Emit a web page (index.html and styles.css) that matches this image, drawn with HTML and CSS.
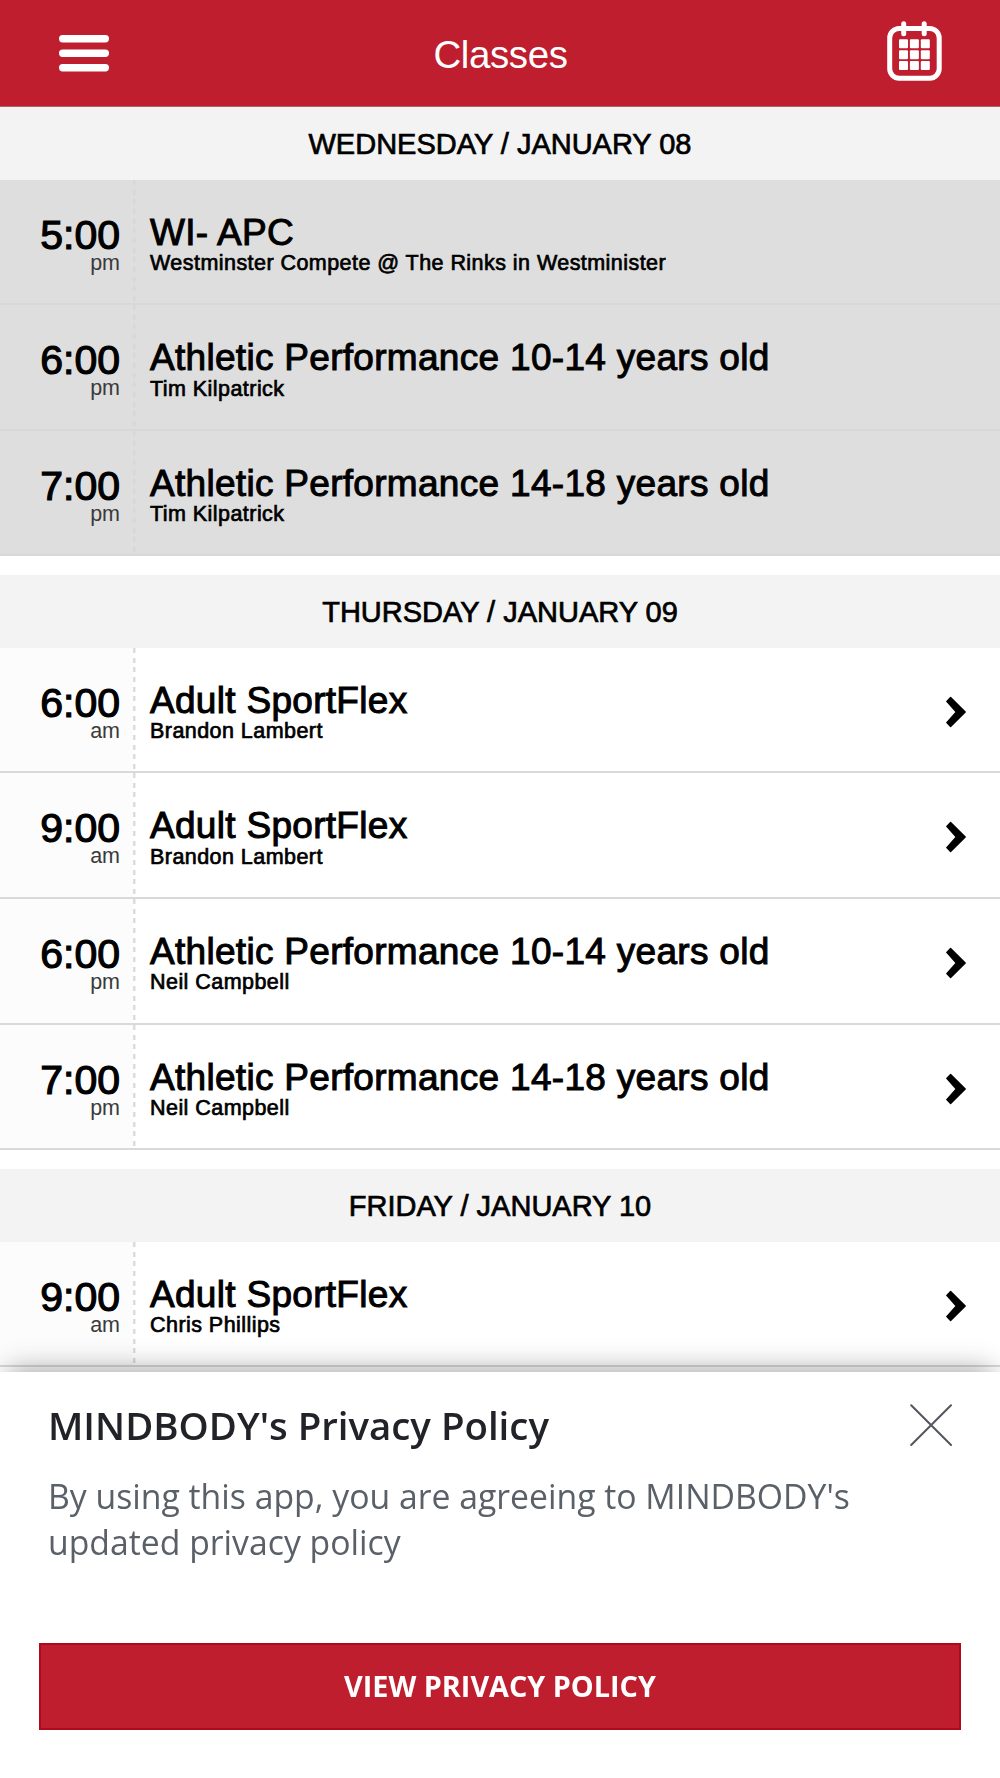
FILE: index.html
```html
<!DOCTYPE html>
<html lang="en">
<head>
    <meta charset="UTF-8">
    <meta name="viewport" content="width=device-width, initial-scale=1.0">
    <title>Classes</title>
    <link rel="stylesheet" href="styles.css">
</head>
<body>
    <header>
        <svg class="menu-icon" width="50" height="38" viewBox="0 0 50 38" fill="#fff">
            <rect x="0" y="0" width="50" height="7.4" rx="3.6"/>
            <rect x="0" y="14.5" width="50" height="7.4" rx="3.6"/>
            <rect x="0" y="29" width="50" height="7.4" rx="3.6"/>
        </svg>
        <h1>Classes</h1>
        <svg class="calendar-icon" width="56" height="60" viewBox="0 0 56 60">
            <rect x="2.7" y="7.5" width="49.5" height="49.8" rx="9.5" fill="none" stroke="#fff" stroke-width="5"/>
            <g fill="#fff">
                <rect x="14.2" y="0.2" width="5" height="15" rx="2.5"/>
                <rect x="34.7" y="0.2" width="5" height="15" rx="2.5"/>
                <rect x="12" y="18.2" width="9" height="9" rx="1"/>
                <rect x="22.9" y="18.2" width="9" height="9" rx="1"/>
                <rect x="33.8" y="18.2" width="9" height="9" rx="1"/>
                <rect x="12" y="29.2" width="9" height="9" rx="1"/>
                <rect x="22.9" y="29.2" width="9" height="9" rx="1"/>
                <rect x="33.8" y="29.2" width="9" height="9" rx="1"/>
                <rect x="12" y="40" width="9" height="9" rx="1"/>
                <rect x="22.9" y="40" width="9" height="9" rx="1"/>
                <rect x="33.8" y="40" width="9" height="9" rx="1"/>
            </g>
        </svg>
    </header>

    <main>
        <section class="day past">
            <h2>WEDNESDAY / JANUARY 08</h2>
            <div class="class-row">
                <div class="time"><b>5:00</b><span>pm</span></div>
                <div class="info"><h3>WI- APC</h3><p>Westminster Compete @ The Rinks in Westminister</p></div>
            </div>
            <div class="class-row">
                <div class="time"><b>6:00</b><span>pm</span></div>
                <div class="info"><h3>Athletic Performance 10-14 years old</h3><p>Tim Kilpatrick</p></div>
            </div>
            <div class="class-row">
                <div class="time"><b>7:00</b><span>pm</span></div>
                <div class="info"><h3>Athletic Performance 14-18 years old</h3><p>Tim Kilpatrick</p></div>
            </div>
        </section>

        <section class="day">
            <h2>THURSDAY / JANUARY 09</h2>
            <div class="class-row">
                <div class="time"><b>6:00</b><span>am</span></div>
                <div class="info"><h3>Adult SportFlex</h3><p>Brandon Lambert</p></div>
                <svg class="chevron" viewBox="0 0 20 32"><path d="M4.6 1.5L0.8 5.4L10.3 16L0.8 26.6L4.6 30.5L19.2 16Z"/></svg>
            </div>
            <div class="class-row">
                <div class="time"><b>9:00</b><span>am</span></div>
                <div class="info"><h3>Adult SportFlex</h3><p>Brandon Lambert</p></div>
                <svg class="chevron" viewBox="0 0 20 32"><path d="M4.6 1.5L0.8 5.4L10.3 16L0.8 26.6L4.6 30.5L19.2 16Z"/></svg>
            </div>
            <div class="class-row">
                <div class="time"><b>6:00</b><span>pm</span></div>
                <div class="info"><h3>Athletic Performance 10-14 years old</h3><p>Neil Campbell</p></div>
                <svg class="chevron" viewBox="0 0 20 32"><path d="M4.6 1.5L0.8 5.4L10.3 16L0.8 26.6L4.6 30.5L19.2 16Z"/></svg>
            </div>
            <div class="class-row">
                <div class="time"><b>7:00</b><span>pm</span></div>
                <div class="info"><h3>Athletic Performance 14-18 years old</h3><p>Neil Campbell</p></div>
                <svg class="chevron" viewBox="0 0 20 32"><path d="M4.6 1.5L0.8 5.4L10.3 16L0.8 26.6L4.6 30.5L19.2 16Z"/></svg>
            </div>
        </section>

        <section class="day">
            <h2>FRIDAY / JANUARY 10</h2>
            <div class="class-row">
                <div class="time"><b>9:00</b><span>am</span></div>
                <div class="info"><h3>Adult SportFlex</h3><p>Chris Phillips</p></div>
                <svg class="chevron" viewBox="0 0 20 32"><path d="M4.6 1.5L0.8 5.4L10.3 16L0.8 26.6L4.6 30.5L19.2 16Z"/></svg>
            </div>
        </section>
    </main>

    <div class="privacy">
        <div class="privacy-head">
            <h4>MINDBODY's Privacy Policy</h4>
            <svg class="close" width="42" height="42" viewBox="0 0 42 42" stroke="#54565e" stroke-width="2" stroke-linecap="round">
                <path d="M1.2 1.2L41 41M41 1.2L1.2 41"/>
            </svg>
        </div>
        <p>By using this app, you are agreeing to MINDBODY's updated privacy policy</p>
        <button>VIEW PRIVACY POLICY</button>
    </div>
</body>
</html>
```

FILE: styles.css
```css
* {
    box-sizing: border-box;
}
body {
    font-family: "Liberation Sans", Arial, sans-serif;
    margin: 0;
    height: 1778px;
    overflow: hidden;
    color: #000;
    background-color: #fff;
}
h1, h2, h3, h4, p {
    margin: 0;
    font-weight: normal;
}
header {
    display: flex;
    justify-content: space-between;
    height: 107px;
    padding: 0 57px 0 59px;
    background-color: #be1e2d;
    border-bottom: 1px solid #a8656b;
}
header h1 {
    color: #fff;
    font-size: 38.5px;
    line-height: 44px;
    letter-spacing: -0.4px;
    margin: 33px 0 0 5px;
}
.menu-icon {
    margin-top: 35px;
}
.calendar-icon {
    margin-top: 21px;
}
.day {
    margin-bottom: 19px;
}
.day h2 {
    height: 72.5px;
    padding-top: 1px;
    background-color: #f3f3f3;
    font-size: 29px;
    line-height: 72px;
    text-align: center;
    -webkit-text-stroke: 0.7px #000;
}
.class-row {
    display: flex;
    height: 125.6px;
    border-bottom: 2px solid #d9d9d9;
}
.time {
    display: flex;
    flex-direction: column;
    width: 136px;
    padding: 35px 16px 0 0;
    text-align: right;
    /* dashed divider over the tinted column */
    background:
        repeating-linear-gradient(#dcdcdc 0 5px, transparent 5px 9.67px) 133px 0 / 2.5px 100% no-repeat,
        linear-gradient(90deg, #fcfcfc 133px, #fff 133px);
}
.time b {
    font-size: 41px;
    font-weight: normal;
    line-height: 41px;
    -webkit-text-stroke: 1.2px #000;
}
.time span {
    font-size: 21.5px;
    line-height: 15px;
    color: #3a3a3a;
}
.info {
    flex: 1;
    padding: 34px 0 0 14px;
}
.info h3 {
    font-size: 37px;
    line-height: 37.5px;
    letter-spacing: 0.3px;
    -webkit-text-stroke: 1px #000;
}
.info p {
    font-size: 21.5px;
    line-height: 25px;
    letter-spacing: 0.45px;
    -webkit-text-stroke: 0.7px #000;
}
.chevron {
    width: 20px;
    height: 32px;
    margin: 48px 34px 0 0;
    stroke: #000;
    stroke-width: 1.4;
    stroke-linejoin: round;
}
.past .class-row {
    background-color: #dedede;
    border-color: #d8d8d8;
}
.past .time {
    background: repeating-linear-gradient(#d8d8d8 0 5px, transparent 5px 9.67px) 133px 0 / 2.5px 100% no-repeat;
}
.privacy {
    position: fixed;
    left: 0;
    right: 0;
    bottom: 0;
    height: 406px;
    padding: 26px 39px 0;
    background-color: #fff;
    box-shadow: 0 -10px 26px -8px rgba(0, 0, 0, 0.37);
    font-family: "Open Sans", sans-serif;
}
.privacy-head {
    display: flex;
    justify-content: space-between;
    padding: 0 9px 0 9px;
}
.privacy h4 {
    font-size: 38.4px;
    font-weight: 600;
    line-height: 54px;
    color: #212328;
}
.close {
    margin-top: 6px;
}
.privacy p {
    height: 92px;
    margin: 21px 60px 0 9px;
    font-size: 33.75px;
    line-height: 46px;
    color: #596068;
}
.privacy button {
    display: block;
    width: 922px;
    height: 87px;
    margin-top: 78px;
    padding: 0 0 2px;
    border: 2px solid #ad0b1c;
    background-color: #be1e2d;
    color: #fff;
    font-family: inherit;
    font-size: 28.8px;
    font-weight: 700;
}
```
